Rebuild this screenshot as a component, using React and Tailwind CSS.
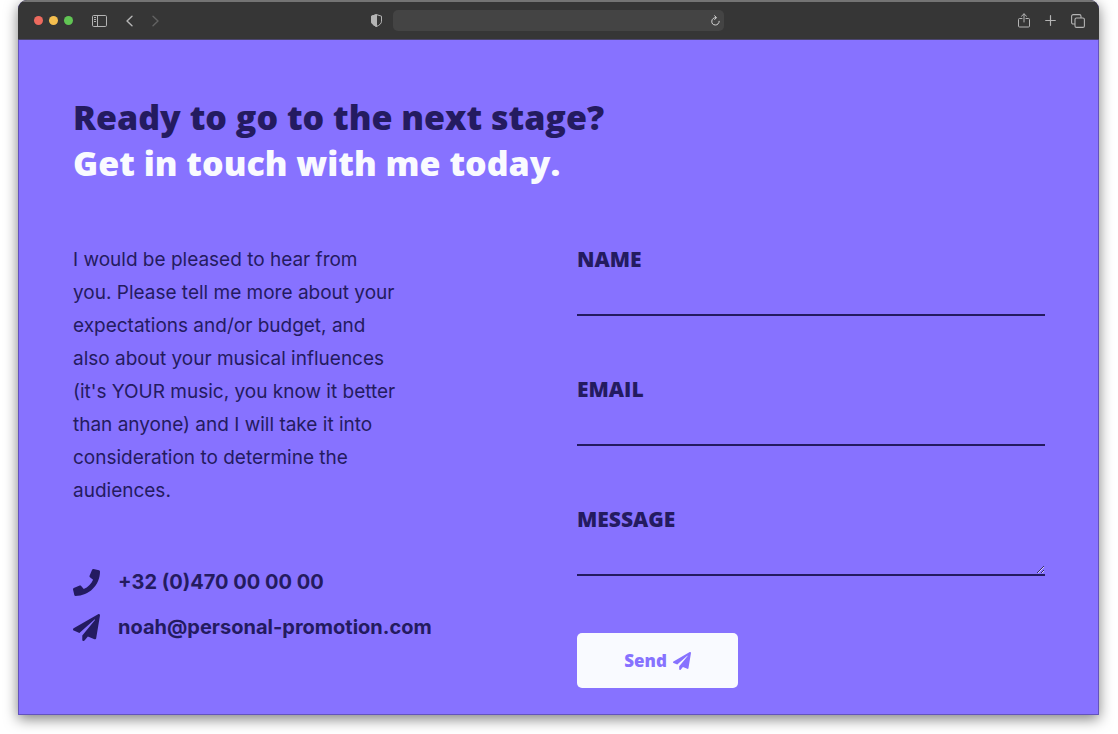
import React from "react";
import { FaPhone, FaPaperPlane } from "react-icons/fa";

function BrowserBar() {
  return (
    <header className="grid h-10 grid-cols-[1fr_2fr_1fr] items-center border-t-2 border-[#747474] border-b border-b-[#4b4570] bg-[#363636] px-[14px] text-[#b4b4b4]">
      <div className="flex items-center pl-[2px]">
        <div className="flex gap-[6px]">
          <span className="size-[9px] rounded-full bg-[#ed6a5e]" />
          <span className="size-[9px] rounded-full bg-[#f5bf4f]" />
          <span className="size-[9px] rounded-full bg-[#61c554]" />
        </div>
        <button type="button" aria-label="Sidebar" className="ml-[19px]">
          <svg className="block h-3 w-[15px]" viewBox="0 0 15 12" fill="none" stroke="currentColor">
            <rect x="0.5" y="0.5" width="14" height="11" rx="1.2" />
            <path d="M5.5 .5v11M2 2.500h2M2 4.500h2M2 6.500h2" />
          </svg>
        </button>
        <button type="button" aria-label="Back" className="ml-[19px]">
          <svg className="block h-3 w-[7px]" viewBox="0 0 7 12" fill="none" stroke="currentColor" strokeWidth="1.4" strokeLinecap="round" strokeLinejoin="round">
            <path d="M6 1.2 1 6l5 4.8" />
          </svg>
        </button>
        <button type="button" aria-label="Forward" className="ml-[19px] text-[#626262]">
          <svg className="block h-3 w-[7px]" viewBox="0 0 7 12" fill="none" stroke="currentColor" strokeWidth="1.4" strokeLinecap="round" strokeLinejoin="round">
            <path d="M1 1.2 6 6l-5 4.8" />
          </svg>
        </button>
      </div>
      <div className="flex items-center justify-center gap-[11px] pr-[22px]">
        <svg className="h-[13px] w-[11px] shrink-0" viewBox="0 0 11 13" fill="none" stroke="currentColor">
          <path d="M5.5 .6 10.5 2.2v5c0 2.400-2 4-5 5.300C2.500 11.200 .5 9.600 .5 7.200v-5Z" />
          <path d="M5.500 .6v11.900C2.500 11.200 .5 9.600 .5 7.200v-5Z" fill="currentColor" />
        </svg>
        <div className="flex h-[21px] w-[331px] items-center rounded-[5px] bg-[#444444] pr-1">
          <input aria-label="Address" className="h-full min-w-0 flex-1 bg-transparent px-2 text-xs outline-none" />
          <button type="button" aria-label="Reload" className="text-[#d8d8d8]">
            <svg className="block h-[11px] w-[9px]" viewBox="0 0 9 11" fill="none" stroke="currentColor" strokeLinecap="round" strokeLinejoin="round">
              <path d="M4.800 2.600A3.700 3.700 0 1 0 8.200 6.300M3.600 .8l1.900 1.800-1.800 1.900" />
            </svg>
          </button>
        </div>
      </div>
      <div className="flex items-center justify-end gap-[15px]">
        <button type="button" aria-label="Share">
          <svg className="block h-[15px] w-3" viewBox="0 0 12 15" fill="none" stroke="currentColor" strokeLinecap="round" strokeLinejoin="round">
            <path d="M4 5.500H1.500a1 1 0 0 0-1 1v6.500a1 1 0 0 0 1 1h9a1 1 0 0 0 1-1V6.500a1 1 0 0 0-1-1H8M6 9V1M3.500 3.200 6 .8l2.500 2.400" />
          </svg>
        </button>
        <button type="button" aria-label="New tab">
          <svg className="block size-[11px]" viewBox="0 0 11 11" fill="none" stroke="currentColor" strokeWidth="1.2" strokeLinecap="round">
            <path d="M5.500 .7v9.600M.7 5.500h9.600" />
          </svg>
        </button>
        <button type="button" aria-label="Tab overview">
          <svg className="block size-[14px]" viewBox="0 0 14 14" fill="none" stroke="currentColor" strokeWidth="1.100">
            <rect x="4" y="4" width="9.400" height="9.400" rx="1.500" />
            <path d="M4 10H2.200A1.600 1.600 0 0 1 .6 8.400V2.200A1.600 1.600 0 0 1 2.200 .6h6.200A1.600 1.600 0 0 1 10 2.200V4" />
          </svg>
        </button>
      </div>
    </header>
  );
}

const labelClass = "block text-[21px] leading-8 font-extrabold uppercase";
const inputClass =
  "block h-[41px] w-full border-b-2 border-[#241b60] bg-transparent font-['Inter',sans-serif] text-lg outline-none";

export default function App() {
  return (
    <div className="bg-white pr-[19px] pb-[19px] pl-[18px] font-['Open_Sans',sans-serif]">
      <div className="overflow-hidden rounded-t-[9px] bg-[#8772ff] text-[#241b60] shadow-[0_4px_14px_rgba(0,0,0,0.5)]">
        <BrowserBar />
        <main className="border-x border-b border-[#6353bd] pt-[54px] pr-[53px] pb-[26px] pl-[54px]">
          <h1 className="text-[34px] leading-[46px] font-extrabold">
            <span className="block">Ready to go to the next stage?</span>
            <span className="block text-[#f9faff]">Get in touch with me today.</span>
          </h1>
          <div className="mt-[57px] grid grid-cols-2 gap-9">
            <section className="font-['Inter',sans-serif]">
              <p className="max-w-[324px] text-[19px] leading-[33px]">
                I would be pleased to hear from you. Please tell me more about your expectations and/or
                budget, and also about your musical influences (it's YOUR music, you know it better than
                anyone) and I will take it into consideration to determine the audiences.
              </p>
              <address className="mt-[59px] grid gap-[13px] text-xl leading-8 font-bold not-italic">
                <a href="tel:+32470000000" className="flex items-center gap-[18px]">
                  <FaPhone className="size-[27px]" />
                  +32 (0)470 00 00 00
                </a>
                <a href="mailto:noah@personal-promotion.com" className="flex items-center gap-[18px]">
                  <FaPaperPlane className="size-[27px]" />
                  noah@personal-promotion.com
                </a>
              </address>
            </section>
            <form className="grid content-start gap-[57px]" onSubmit={(e) => e.preventDefault()}>
              <div>
                <label htmlFor="name" className={labelClass}>Name</label>
                <input id="name" type="text" className={inputClass} />
              </div>
              <div>
                <label htmlFor="email" className={labelClass}>Email</label>
                <input id="email" type="email" className={inputClass} />
              </div>
              <div>
                <label htmlFor="message" className={labelClass}>Message</label>
                <textarea id="message" rows={1} className={`${inputClass} resize-y`} />
              </div>
              <button
                type="submit"
                className="flex h-[55px] w-[161px] items-center justify-center gap-[6px] rounded-[5px] bg-[#f9faff] text-[17px] font-extrabold text-[#8772ff]"
              >
                Send
                <FaPaperPlane className="size-[18px]" />
              </button>
            </form>
          </div>
        </main>
      </div>
    </div>
  );
}
